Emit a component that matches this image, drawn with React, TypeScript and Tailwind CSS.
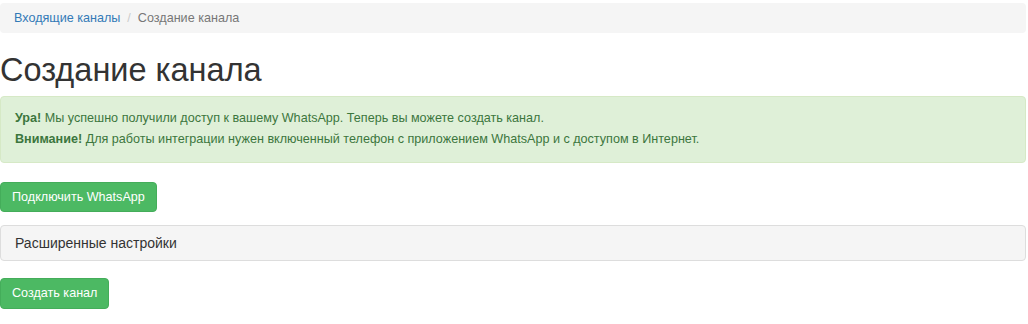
import React from 'react';

const App: React.FC = () => {
  return (
    <div className="w-[1028px] h-[324px] bg-white text-[#333] font-['Liberation_Sans',Arial,sans-serif]">
      <div className="w-[1026px] pt-[3px]">
        <ol className="flex items-center h-[30px] px-[14px] rounded bg-[#f5f5f5] text-[12.6px]">
          <li>
            <a href="#" className="text-[#337ab7]">Входящие каналы</a>
          </li>
          <li className="px-[7px] text-[#ccc]">/</li>
          <li className="text-[#777]">Создание канала</li>
        </ol>

        <h1 className="mt-[18px] mb-[7px] text-[32.5px] leading-[38px] font-normal text-[#333]">Создание канала</h1>

        <div className="border border-[#d6e9c6] bg-[#dff0d8] rounded text-[#3c763d] text-[12.6px] leading-[21px] pl-[14px] pt-[11px] pb-[12px]">
          <p>
            <b>Ура!</b> Мы успешно получили доступ к вашему WhatsApp. Теперь вы можете создать канал.
          </p>
          <p>
            <b>Внимание!</b> Для работы интеграции нужен включенный телефон с приложением WhatsApp и с доступом в Интернет.
          </p>
        </div>

        <button className="block mt-[19px] h-[30px] px-[11px] rounded bg-[#4cb963] border border-[#44ad5a] text-white text-[12.6px]">
          Подключить WhatsApp
        </button>

        <div className="mt-[13px] h-[36px] flex items-center px-[14px] bg-[#f5f5f5] border border-[#ddd] rounded text-[14px] text-[#333]">
          Расширенные настройки
        </div>

        <button className="block mt-[17px] h-[31px] px-[11px] rounded bg-[#4cb963] border border-[#44ad5a] text-white text-[12.6px]">
          Создать канал
        </button>
      </div>
    </div>
  );
};

export default App;
